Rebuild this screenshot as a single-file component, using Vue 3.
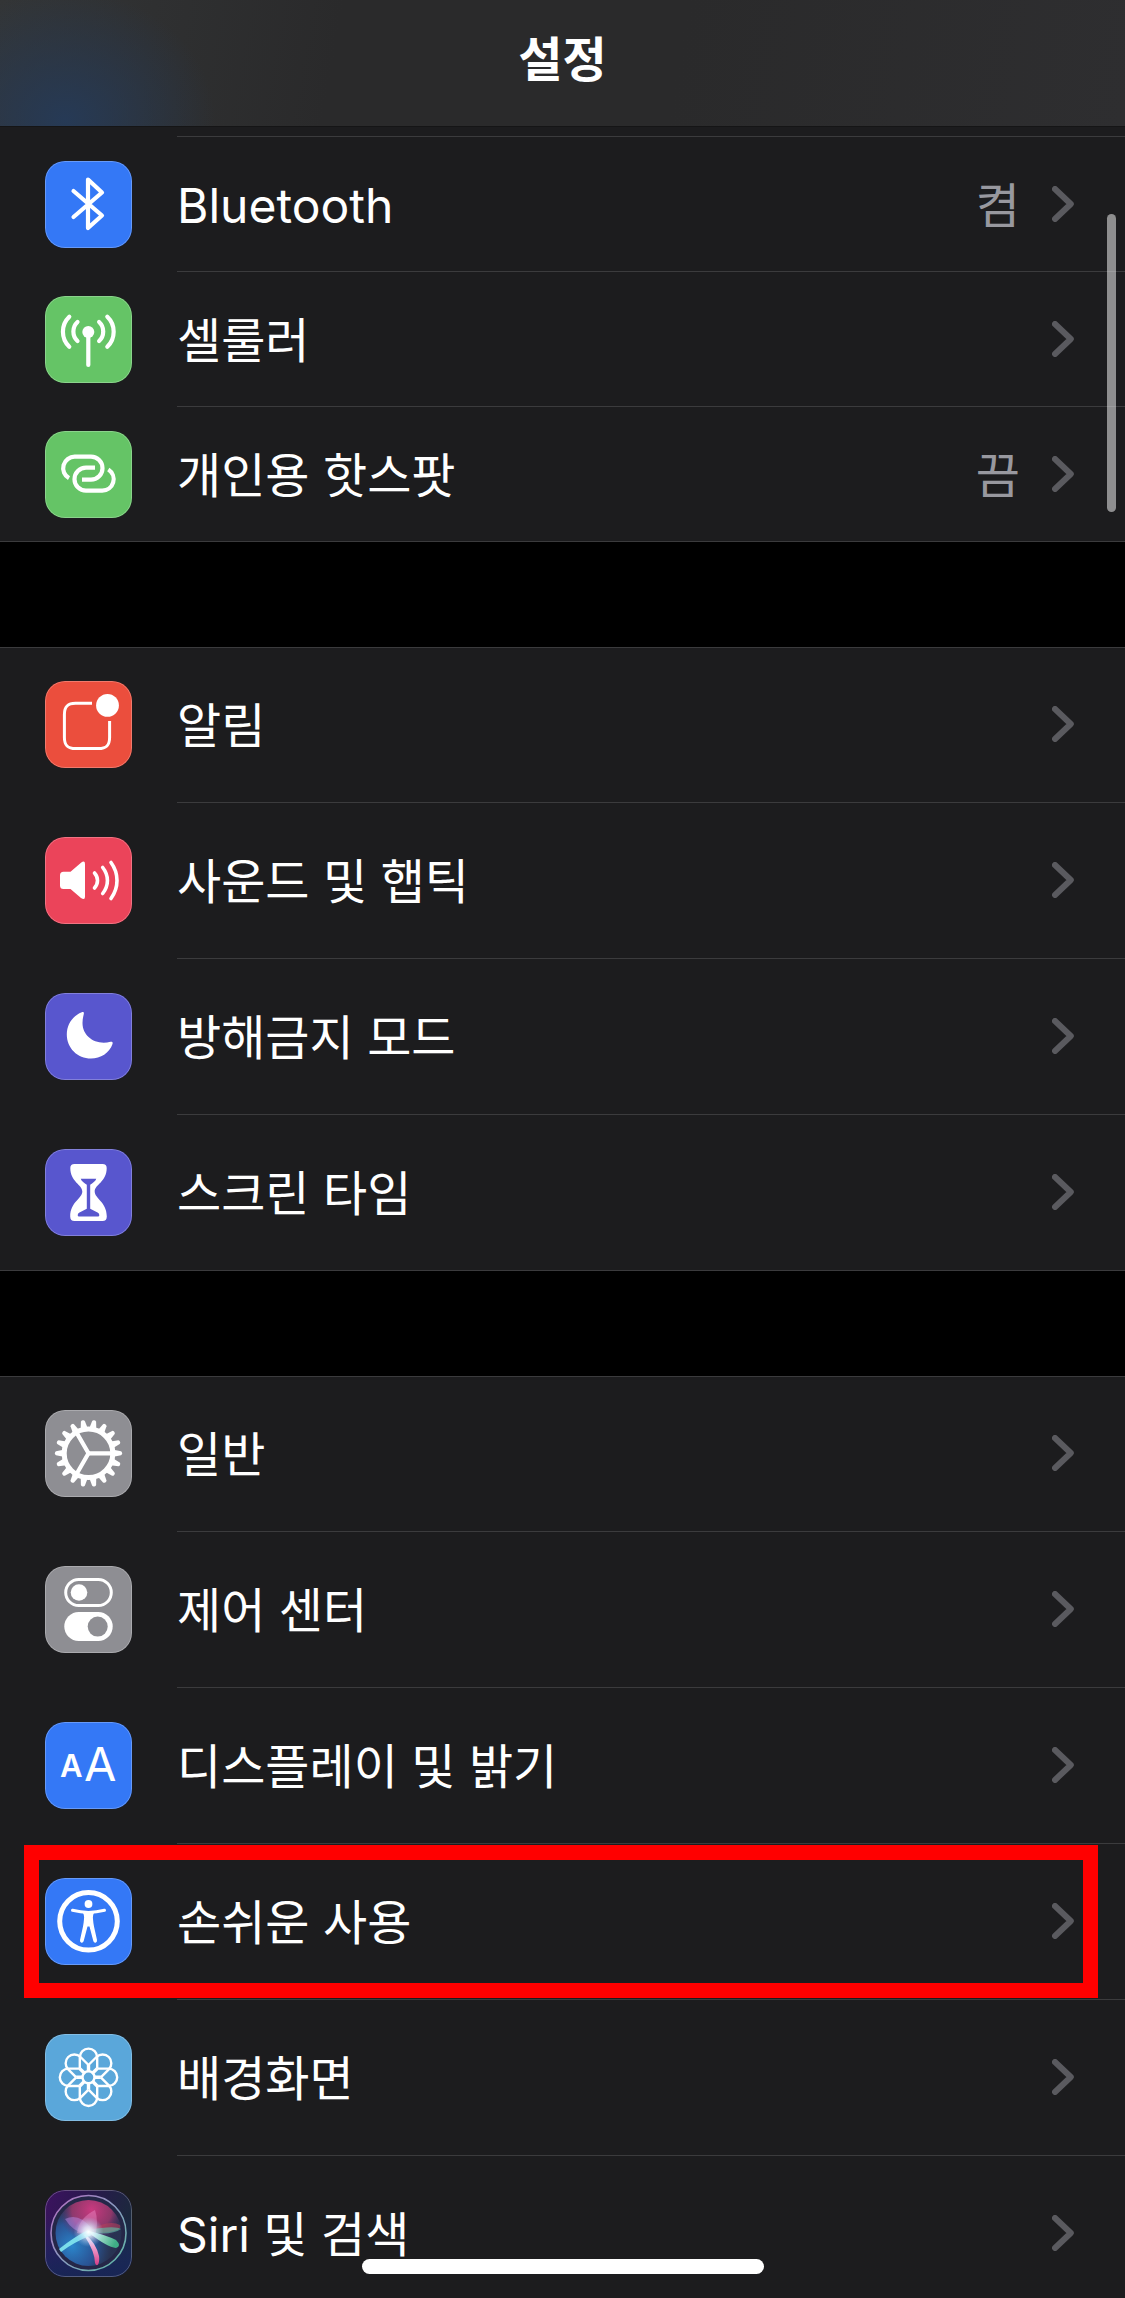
<template>
  <div class="screen">
    <header class="topbar">
      <h1>설정</h1>
    </header>

    <main class="scroller">
      <section v-for="(group, i) in groups" :key="i" class="group" :class="{ continued: i === 0 }">
        <ul>
          <li v-for="row in group" :key="row.icon" class="row" :class="{ marked: row.marked }">
            <a href="#" class="link" :class="{ compact: i === 0 }">
              <svg class="icon" :class="row.icon" viewBox="0 0 87 87" aria-hidden="true">
                <g v-if="row.icon === 'bluetooth'" class="line w4">
                  <path d="M28.5 30 57 54.5 43 67V18.5L57 31.5 28.5 56" />
                </g>

                <g v-else-if="row.icon === 'cellular'" class="line w4">
                  <circle cx="43.3" cy="36" r="6" class="solid" />
                  <path d="M43.3 36V69" />
                  <path d="M32.5 26C27 31 27 40 32.5 45M54.1 26c5.5 5 5.5 14 0 19" />
                  <path d="M24.3 20.7c-8.5 8-8.5 22 0 30M62.3 20.7c8.5 8 8.5 22 0 30" />
                </g>

                <g v-else-if="row.icon === 'hotspot'" class="line w4 butt">
                  <path d="M24 47.2A11.5 11.5 0 0 1 30 25.7H46A11.5 11.5 0 0 1 46 48.7H37" />
                  <path d="M50 36.7H41A11.5 11.5 0 0 0 41 59.7H57.2A11.5 11.5 0 0 0 63.3 38.5" />
                </g>

                <g v-else-if="row.icon === 'notifications'" class="line w3 butt">
                  <path d="M47 22.3H30.5C22.5 22.3 19.4 25.5 19.4 33.5V56.5C19.4 64.5 22.5 67.6 30.5 67.6H53.5C61.5 67.6 64.6 64.5 64.6 56.5V40" />
                  <circle cx="62.5" cy="24.4" r="11.4" class="solid" />
                </g>

                <g v-else-if="row.icon === 'sounds'" class="line w3">
                  <path class="solid" d="M18.5 34.7H25.5L36 25.7Q40 23 40 27V59.8Q40 63.5 36 61L25.5 52H18.5Q15 52 15 48.5V38.2Q15 34.7 18.5 34.7Z" />
                  <path class="wave" d="M49.5 36C53.5 40.5 53.5 46.5 49.5 51M57.7 30.5C64 38.5 64 48.5 57.7 56.5M66 25.5C74 36.5 74 50.5 66 61.5" />
                </g>

                <path v-else-if="row.icon === 'dnd'" class="solid" d="M36.8 19.3C27.5 23 21.8 31.5 21.8 41.5C21.8 55 32.5 65.6 46 65.6C55.5 65.6 64.5 60 67.5 51C68 49.2 67.2 48.3 65.5 48.8C50.5 52.5 37.5 43.5 37.5 30C37.5 26.5 38.2 23.5 38.8 21C39.2 19.3 38.3 18.6 36.8 19.3Z" />

                <g v-else-if="row.icon === 'screentime'">
                  <path class="solid" d="M29.5 15H57.5Q61.7 15 61.7 19C61.7 33 49.7 35.5 49.7 42.5C49.7 49.5 61.8 53 61.8 67.5Q61.8 72 57.5 72H29.5Q25.2 72 25.2 67.5C25.2 53 37.3 49.5 37.3 42.5C37.3 35.5 25.3 33 25.3 19Q25.3 15 29.5 15Z" />
                  <path class="cut" d="M35.7 29.7H51.3C50.7 32.2 47.5 34 45.2 35.8V59.7L53 63.8Q54.3 64.5 54.3 66.2Q54.3 67.4 53 67.4H34Q32.7 67.4 32.7 66.2Q32.7 64.5 34 63.8L41.8 59.7V35.8C39.5 34 36.3 32.2 35.7 29.7Z" />
                </g>

                <g v-else-if="row.icon === 'general'" transform="translate(43.5 43.3)">
                  <path v-for="n in 18" :key="n" class="solid" d="M25-3.5 32.5-2Q33.6-1.6 33.6 0T32.5 2L25 3.5Z" :transform="`rotate(${n * 20})`" />
                  <circle r="24.3" class="line ring" />
                  <path v-for="n in 3" :key="'s' + n" class="line w4" d="M0 0H23" :transform="`rotate(${n * 120})`" />
                </g>

                <g v-else-if="row.icon === 'control'">
                  <rect x="20.7" y="13.4" width="45.6" height="26.2" rx="13.1" class="line w3" />
                  <circle cx="34" cy="26.5" r="8.3" class="solid" />
                  <rect x="19.3" y="46" width="48.4" height="29" rx="14.5" class="solid" />
                  <circle cx="52.7" cy="60.6" r="10" class="cut" />
                </g>

                <g v-else-if="row.icon === 'display'" class="letters">
                  <text x="15" y="55" class="small">A</text>
                  <text x="39" y="59" class="big">A</text>
                </g>

                <g v-else-if="row.icon === 'accessibility'">
                  <circle cx="43.5" cy="43.3" r="28.8" class="line ring" />
                  <circle cx="43.5" cy="26" r="3.9" class="solid" />
                  <path class="line w3" d="M27.5 32.3Q43.5 36.5 59.5 32.3" />
                  <path class="solid" d="M37 33.5H50Q47.5 36 48 41Q48.3 45 49 48.5L52 62Q52.3 64.3 50.6 64.7Q48.9 65 48.3 63L44.5 48.5H42.5L38.7 63Q38.1 65 36.4 64.7Q34.7 64.3 35 62L38 48.5Q38.7 45 39 41Q39.5 36 37 33.5Z" />
                </g>

                <g v-else-if="row.icon === 'wallpaper'" class="line thin butt" transform="translate(43.5 43.3)">
                  <circle r="6" />
                  <g v-for="n in 8" :key="n" :transform="`rotate(${n * 45})`">
                    <path d="M-8.7-8.7V-20A8.7 8.7 0 0 1 8.7-20V-8.7" />
                    <path class="spoke" d="M0-6V-12.3" />
                  </g>
                </g>

                <g v-else-if="row.icon === 'siri'">
                  <defs>
                    <linearGradient id="siri-bg" x1="0" y1="0" x2="1" y2="0.4">
                      <stop offset="0" stop-color="#3d1260" />
                      <stop offset="0.5" stop-color="#281a4c" />
                      <stop offset="1" stop-color="#1a2a3b" />
                    </linearGradient>
                    <linearGradient id="siri-low" x1="0" y1="0" x2="0" y2="1">
                      <stop offset="0.3" stop-color="#1c2a75" stop-opacity="0" />
                      <stop offset="1" stop-color="#182555" />
                    </linearGradient>
                    <linearGradient id="siri-rim" x1="0" y1="0" x2="1" y2="1">
                      <stop offset="0" stop-color="#b56bc0" />
                      <stop offset="0.5" stop-color="#8a9bc0" />
                      <stop offset="1" stop-color="#58b9a0" />
                    </linearGradient>
                    <radialGradient id="siri-pink" cx="0.55" cy="0.15" r="0.5">
                      <stop offset="0" stop-color="#c93a80" />
                      <stop offset="0.6" stop-color="#a8386f" stop-opacity="0.8" />
                      <stop offset="1" stop-color="#5a2c70" stop-opacity="0" />
                    </radialGradient>
                    <radialGradient id="siri-blue" cx="0.25" cy="0.7" r="0.6">
                      <stop offset="0" stop-color="#2b86cb" />
                      <stop offset="0.6" stop-color="#2b5fa8" stop-opacity="0.8" />
                      <stop offset="1" stop-color="#2c4460" stop-opacity="0.4" />
                    </radialGradient>
                    <radialGradient id="siri-glow">
                      <stop offset="0" stop-color="#fff" />
                      <stop offset="0.35" stop-color="#e4f6ff" stop-opacity="0.75" />
                      <stop offset="1" stop-color="#9fd0ff" stop-opacity="0" />
                    </radialGradient>
                    <linearGradient id="siri-green" x1="0" y1="0" x2="1" y2="0.3">
                      <stop offset="0" stop-color="#e8ffff" />
                      <stop offset="1" stop-color="#3fae86" />
                    </linearGradient>
                    <linearGradient id="siri-tail" x1="0" y1="0" x2="0" y2="1">
                      <stop offset="0" stop-color="#ffe6ff" />
                      <stop offset="1" stop-color="#d63c86" />
                    </linearGradient>
                  </defs>
                  <rect width="87" height="87" fill="url(#siri-bg)" />
                  <rect width="87" height="87" fill="url(#siri-low)" />
                  <circle cx="43.5" cy="43" r="37.5" fill="#252748" />
                  <circle cx="43.5" cy="43" r="33" fill="url(#siri-blue)" />
                  <circle cx="43.5" cy="43" r="33" fill="url(#siri-pink)" />
                  <path d="M43 41Q64 29 75 35Q79 43 43 43Z" fill="#b63f5c" opacity="0.6" />
                  <path d="M43 42Q66 46 76 39Q70 35 43 40Z" fill="#5dc3a8" opacity="0.6" />
                  <path d="M20 29Q34 22 47 39L41 44Q28 42 20 29Z" fill="#b98ae6" opacity="0.5" />
                  <path d="M32 43Q34 28 50 20Q54 32 50 46Z" fill="#ee8cc8" opacity="0.45" />
                  <path d="M41 45Q51 53 54 66C55 74 52 78 50 73Q50 62 39 45Z" fill="url(#siri-tail)" />
                  <path d="M44 41Q61 45 71 50Q77 56 71 58Q62 57 44 43Z" fill="url(#siri-green)" />
                  <path d="M43 40Q29 47 14 59L16 62Q29 52 47 45Z" fill="#83e8ef" opacity="0.9" />
                  <circle cx="43.5" cy="42" r="15" fill="url(#siri-glow)" />
                  <circle cx="43.5" cy="43" r="37.5" fill="none" stroke="url(#siri-rim)" stroke-width="1.6" />
                </g>

                <rect class="edge" x="0.5" y="0.5" width="86" height="86" rx="19.5" />
              </svg>

              <span class="label">{{ row.label }}</span>
              <span v-if="row.value" class="value">{{ row.value }}</span>
              <svg class="chevron" viewBox="0 0 22 36" aria-hidden="true">
                <path d="M3 3 18.8 18 3 33" />
              </svg>
            </a>
          </li>
        </ul>
      </section>
    </main>

    <div class="scroll-thumb"></div>
    <div class="home-bar"></div>
  </div>
</template>

<script setup>
const groups = [
  [
    { icon: 'bluetooth', label: 'Bluetooth', value: '켬' },
    { icon: 'cellular', label: '셀룰러' },
    { icon: 'hotspot', label: '개인용 핫스팟', value: '끔' },
  ],
  [
    { icon: 'notifications', label: '알림' },
    { icon: 'sounds', label: '사운드 및 햅틱' },
    { icon: 'dnd', label: '방해금지 모드' },
    { icon: 'screentime', label: '스크린 타임' },
  ],
  [
    { icon: 'general', label: '일반' },
    { icon: 'control', label: '제어 센터' },
    { icon: 'display', label: '디스플레이 및 밝기' },
    { icon: 'accessibility', label: '손쉬운 사용', marked: true },
    { icon: 'wallpaper', label: '배경화면' },
    { icon: 'siri', label: 'Siri 및 검색' },
  ],
]
</script>

<style>
body {
  margin: 0;
  background: #000;
}
</style>

<style scoped>
.screen {
  position: relative;
  display: flex;
  flex-direction: column;
  height: 100vh;
  overflow: hidden;
  background: #000;
  color: #fff;
  font-family: Inter, "Noto Sans CJK KR", sans-serif;
}
.topbar {
  flex: none;
  display: flex;
  align-items: center;
  justify-content: center;
  box-sizing: border-box;
  height: 127px;
  padding-bottom: 6px;
  border-bottom: 1px solid #151516;
  background:
    radial-gradient(ellipse 150px 130px at 65px 120px, #263a56, rgba(38, 58, 86, 0)),
    linear-gradient(100deg, #333536, #2a2a2b 30%, #2a2a2b 60%, #2e2e30);
}
h1 {
  margin: 0;
  font-size: 48px;
  line-height: 72px;
  font-weight: 600;
}
.scroller {
  flex: 1;
  min-height: 0;
  overflow-y: auto;
  scrollbar-width: none;
  display: flex;
  flex-direction: column;
  gap: 105px;
}
.group {
  flex: none;
  background: #1c1c1e;
  box-shadow: inset 0 1px #3b3b3d, inset 0 -1px #3b3b3d;
}
/* first group is partly scrolled under the title bar */
.group.continued {
  padding-top: 10px;
  box-shadow: inset 0 -1px #3b3b3d;
}
ul {
  margin: 0;
  padding: 0;
  list-style: none;
}
.row {
  position: relative;
}
.row + .row::before,
.continued .row::before {
  content: "";
  position: absolute;
  top: -1px;
  left: 177px;
  right: 0;
  height: 1px;
  background: #3b3b3d;
}
.row.marked::after {
  content: "";
  position: absolute;
  inset: 1px 27px 2px 24px;
  border: 15px solid #f00;
  pointer-events: none;
}
.link {
  display: flex;
  align-items: center;
  box-sizing: border-box;
  height: 156px;
  padding: 0 51px 1px 45px;
  color: inherit;
  text-decoration: none;
}
.link.compact {
  height: 135px;
}
.icon {
  flex: none;
  width: 87px;
  height: 87px;
  margin-right: 45px;
  border-radius: 20px;
  background: var(--tile);
}
.label,
.value {
  padding-top: 3px;
  font-size: 48px;
  line-height: 72px;
}
.label {
  flex: 1;
}
.value {
  margin-right: 32px;
  color: #98989f;
}
.chevron {
  flex: none;
  width: 22px;
  height: 36px;
  margin-bottom: 1px;
}
.chevron path {
  fill: none;
  stroke: #5a5a5f;
  stroke-width: 6;
  stroke-linecap: round;
  stroke-linejoin: round;
}

.line {
  fill: none;
  stroke: #fff;
  stroke-linecap: round;
  stroke-linejoin: round;
}
.butt { stroke-linecap: butt; }
.w4 { stroke-width: 4.2; }
.w3 { stroke-width: 3; }
.wave { stroke-width: 3.6; }
.ring { stroke-width: 5; }
.thin { stroke-width: 2.4; }
.spoke { stroke-width: 3.4; }
.solid {
  fill: #fff;
  stroke: none;
}
.cut { fill: var(--tile); }
.edge {
  fill: none;
  stroke: rgba(255, 255, 255, 0.25);
}
.letters {
  fill: #fff;
  font-family: Inter, sans-serif;
}
.small {
  font-size: 31px;
  font-weight: 600;
}
.big { font-size: 47px; }

.bluetooth, .display, .accessibility { --tile: #3478f6; }
.cellular, .hotspot { --tile: #65c466; }
.notifications { --tile: #eb4e3d; }
.sounds { --tile: #eb445a; }
.dnd, .screentime { --tile: #5856ce; }
.general, .control { --tile: #8e8e93; }
.wallpaper { --tile: #5aa7da; }
.siri { --tile: #281a4c; }

.scroll-thumb {
  position: absolute;
  top: 214px;
  right: 9px;
  width: 9px;
  height: 298px;
  border-radius: 5px;
  background: rgba(255, 255, 255, 0.5);
}
.home-bar {
  position: absolute;
  bottom: 24px;
  left: 50%;
  width: 402px;
  height: 15px;
  border-radius: 8px;
  background: #fff;
  transform: translateX(-50%);
}
</style>
